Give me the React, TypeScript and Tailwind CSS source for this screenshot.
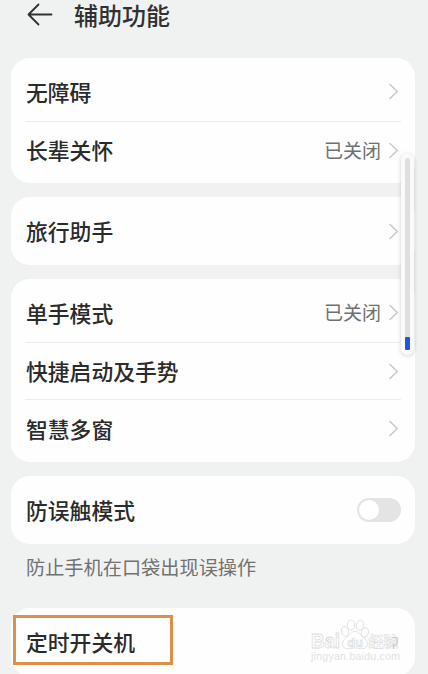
import { useState } from 'react';
import clsx from 'clsx';

type Item = { label: string; value?: string; toggle?: boolean; plain?: boolean; marked?: boolean };
type Group = { id: string; items: Item[]; hint?: string };

const GROUPS: Group[] = [
  { id: 'access', items: [{ label: '无障碍' }, { label: '长辈关怀', value: '已关闭' }] },
  { id: 'travel', items: [{ label: '旅行助手' }] },
  {
    id: 'gestures',
    items: [{ label: '单手模式', value: '已关闭' }, { label: '快捷启动及手势' }, { label: '智慧多窗' }],
  },
  { id: 'pocket', items: [{ label: '防误触模式', toggle: true }], hint: '防止手机在口袋出现误操作' },
  { id: 'power', items: [{ label: '定时开关机', plain: true, marked: true }] },
];

function BackArrow() {
  return (
    <svg className="mt-[3px]" width="26" height="24" viewBox="0 0 26 24" fill="none" stroke="#303131" strokeWidth="1.8"
      strokeLinecap="round" strokeLinejoin="round">
      <path d="M24.5 11.5H1.5M11.5 1.5L1.5 11.5L11.5 21.5" />
    </svg>
  );
}

function Chevron() {
  return (
    <svg className="shrink-0" width="10" height="17" viewBox="0 0 10 17" fill="none" stroke="#cbcbcb"
      strokeWidth="1.6" strokeLinecap="round" strokeLinejoin="round">
      <path d="M1 1.5L8.3 8.5L1 15.5" />
    </svg>
  );
}

function Toggle() {
  const [on, setOn] = useState(false);
  return (
    <button
      role="switch"
      aria-checked={on}
      onClick={() => setOn(!on)}
      className={clsx('-mr-0.5 flex h-6 w-11 items-center rounded-full p-0.5', on ? 'justify-end bg-[#1f55e0]' : 'bg-[#e4e4e4]')}>
      <span className="size-5 rounded-full bg-white" />
    </button>
  );
}

function Row({ item, divided }: { item: Item; divided: boolean }) {
  return (
    <div className={clsx('relative flex h-[57.7px] items-center justify-between pr-0.5 pl-px',
      divided && 'border-t border-[#ececec]')}>
      <span className="text-[21.8px] leading-none font-medium text-[#2a2b2b]">{item.label}</span>
      {item.toggle && <Toggle />}
      {!item.toggle && !item.plain && (
        <span className="flex items-center gap-2">
          {item.value && <span className="pb-0.5 text-[19px] leading-none text-[#707070]">{item.value}</span>}
          <Chevron />
        </span>
      )}
      {/* Highlight frame */}
      {item.marked && <span className="absolute top-[2px] -left-3 h-[50px] w-40 border-3 border-[#dd9148]" />}
    </div>
  );
}

function Watermark() {
  return (
    <svg className="absolute top-[616px] left-[308px]" width="96" height="50" viewBox="0 0 96 50"
      fontFamily="'Liberation Sans', 'Noto Sans CJK SC', sans-serif">
      <g fill="#fefefe" stroke="#dcdcdc" strokeWidth="0.8">
        <text x="3" y="32" fontSize="21" fontWeight="bold" textLength="29" lengthAdjust="spacingAndGlyphs">Bai</text>
        <path d="M47 15.500c-4.500 0-5.500 4-8.500 6c-5.500 4-5.500 10.500 .5 11.200c3 .3 5-.7 8-.7s5 1 8 .7c6-.7 6-7.200 .5-11.200c-3-2-4.500-6-8.500-6Z" />
        <ellipse cx="37" cy="15.500" rx="3.500" ry="5" transform="rotate(-15 37 15.5)" />
        <ellipse cx="43" cy="9" rx="3.700" ry="5" />
        <ellipse cx="52" cy="9.300" rx="3.700" ry="5" transform="rotate(8 52 9.3)" />
        <ellipse cx="57" cy="16.500" rx="3.500" ry="4.800" transform="rotate(18 57 16.5)" />
        <text x="60.500" y="31" fontSize="15" fontWeight="bold" strokeWidth="0.6">经验</text>
      </g>
      <text x="39.500" y="30.500" fontSize="12.500" fontWeight="bold" fill="#fefefe" stroke="#d9d9d9" strokeWidth="0.7">du</text>
      <path d="M84.5 21.5h4.500v7l-3.500 1M85.500 28v5" fill="none" stroke="#b8b8b8" strokeWidth="0.7" />
      <text x="3" y="44" fontSize="10.500" fill="#e2e2e2" textLength="89">jingyan.baidu.com</text>
    </svg>
  );
}

export default function App() {
  return (
    <div className="relative h-[674px] w-[428px] overflow-hidden bg-[#f0f2f2] font-['Noto_Sans_CJK_SC',sans-serif]">
      {/* Header */}
      <header className="flex h-[58px] items-start gap-[21px] pl-[27px]">
        <BackArrow />
        <h1 className="text-[24px] leading-[30px] font-medium text-[#303131]">辅助功能</h1>
      </header>

      <main className="pr-[13px] pl-[11px]">
        {GROUPS.map((group) => (
          <section key={group.id} className={group.hint ? 'mb-[27px]' : 'mb-3.5'}>
            <div className="rounded-[19px] bg-[#fefefe] px-3.5 py-[5px]">
              {group.items.map((item, i) => (
                <Row key={item.label} item={item} divided={i > 0} />
              ))}
            </div>
            {group.hint && (
              <p className="pt-[11px] pb-px pl-[15px] text-[19.2px] leading-[25px] text-[#707171]">{group.hint}</p>
            )}
          </section>
        ))}
      </main>

      {/* Floating scroll indicator */}
      <div className="absolute top-[153px] left-[401px] flex h-[202px] w-[13px] flex-col items-center rounded-full bg-[#fafafa] pt-[5px] shadow-[0_1px_4px_rgba(0,0,0,0.18)]">
        <div className="w-[5px] flex-1 rounded-t-full bg-[#dedfdf]" />
        <div className="mb-[5px] h-[13px] w-[5px] rounded-[1px] bg-[#1f55e0]" />
      </div>

      <Watermark />
    </div>
  );
}
